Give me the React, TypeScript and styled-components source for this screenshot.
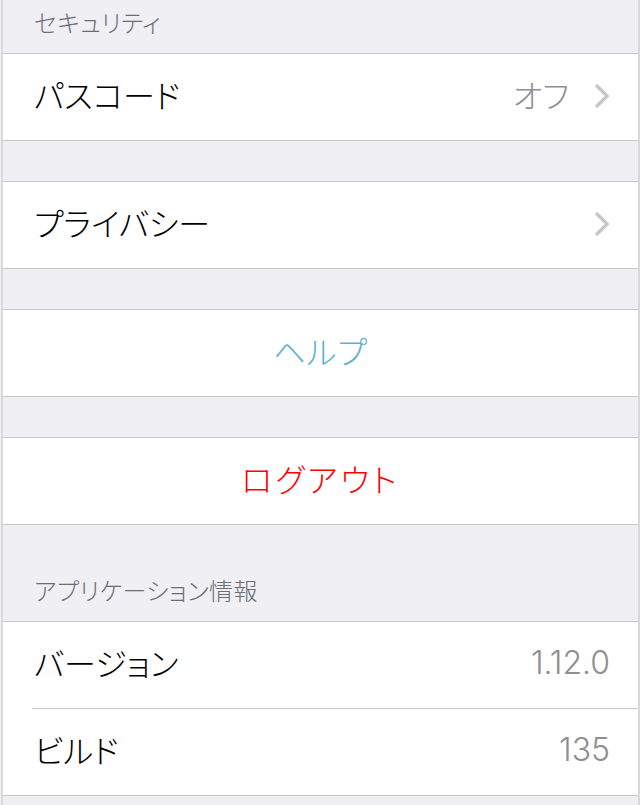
import styled, { createGlobalStyle } from "styled-components";

const GlobalStyle = createGlobalStyle`
    html, body {
        margin: 0;
        padding: 0;
        background-color: #efeff4;
    }
    body {
        font-family: Inter, "Noto Sans CJK JP", sans-serif;
        font-weight: 300;
        font-feature-settings: "palt";
        -webkit-font-smoothing: antialiased;
    }
`;

const Page = styled.div`
    min-height: 805px;
    margin-left: 1px;
    border-left: 2px solid #d9d9dc;
    border-right: 2px solid #d9d9dc;
    background-color: #efeff4;
`;

const SectionHeader = styled.div<{ $height: number }>`
    height: ${(props) => props.$height}px;
    box-sizing: border-box;
    display: flex;
    align-items: flex-end;
    padding: 0 0 14px 31px;
    font-size: 24px;
    color: #6d6d72;
    letter-spacing: 0.5px;
`;

const Group = styled.div`
    background-color: #ffffff;
    border-top: 1px solid #c8c7cc;
    border-bottom: 1px solid #c8c7cc;
`;

const Spacer = styled.div`
    height: 40px;
`;

const Row = styled.div`
    height: 86px;
    box-sizing: border-box;
    display: flex;
    align-items: center;
    justify-content: space-between;
    padding: 0 28px 6px 31px;
    font-size: 32px;
    color: #000000;
`;

const Value = styled.div`
    display: flex;
    align-items: center;
    gap: 24px;
    color: #8e8e93;
`;

const ActionRow = styled.div<{ $color: string; $spacing: number }>`
    height: 86px;
    box-sizing: border-box;
    padding-bottom: 6px;
    display: flex;
    align-items: center;
    justify-content: center;
    font-size: 32px;
    letter-spacing: ${(props) => props.$spacing}px;
    color: ${(props) => props.$color};
`;

const Divider = styled.div`
    height: 1px;
    margin-left: 29px;
    background-color: #c8c7cc;
`;

const Chevron = () => (
    <svg width="17" height="28" viewBox="0 0 17 28" style={{ marginTop: 4 }}>
        <polyline
            points="3,3 14,14 3,25"
            fill="none"
            stroke="#c7c7cc"
            strokeWidth="3.5"
        />
    </svg>
);

const App = () => {
    return (
        <Page>
            <GlobalStyle />
            <SectionHeader $height={53}>セキュリティ</SectionHeader>
            <Group>
                <Row>
                    パスコード
                    <Value>
                        オフ
                        <Chevron />
                    </Value>
                </Row>
            </Group>
            <Spacer />
            <Group>
                <Row>
                    プライバシー
                    <Value>
                        <Chevron />
                    </Value>
                </Row>
            </Group>
            <Spacer />
            <Group>
                <ActionRow $color="#64b2c9" $spacing={1}>
                    ヘルプ
                </ActionRow>
            </Group>
            <Spacer />
            <Group>
                <ActionRow $color="#ff0000" $spacing={3}>
                    ログアウト
                </ActionRow>
            </Group>
            <SectionHeader $height={96}>アプリケーション情報</SectionHeader>
            <Group>
                <Row>
                    バージョン
                    <Value>1.12.0</Value>
                </Row>
                <Divider />
                <Row>
                    ビルド
                    <Value>135</Value>
                </Row>
            </Group>
        </Page>
    );
};

export default App;
